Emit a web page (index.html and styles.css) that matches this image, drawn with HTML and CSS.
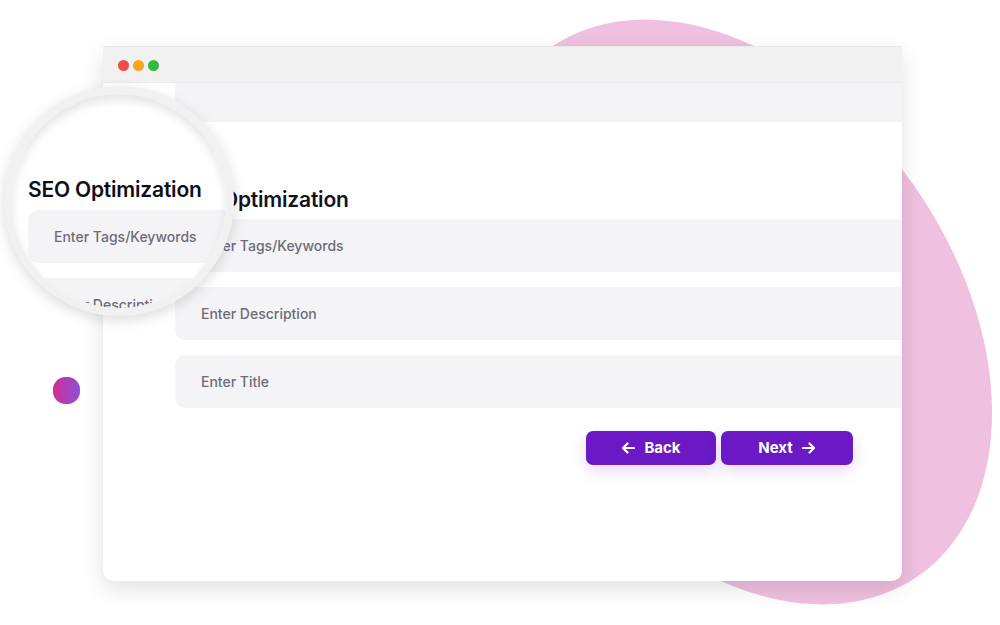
FILE: index.html
```html
<!doctype html>
<html>
<head>

  <title>SEO Optimization</title>

  <link rel="stylesheet" href="styles.css">

</head>
<body>

  <div class="stage">
    <div class="blob"></div>
    <div class="dot"></div>

    <div class="window">
      <div class="titlebar">
        <span class="light red"></span>
        <span class="light amber"></span>
        <span class="light green"></span>
      </div>
      <div class="strip"></div>

      <div class="form">
        <h2 class="heading">SEO Optimization</h2>
        <div class="field">Enter Tags/Keywords</div>
        <div class="field">Enter Description</div>
        <div class="field">Enter Title</div>

        <div class="actions">
          <button class="btn">
            <svg width="14" height="12" viewBox="0 0 14 12"><path d="M13 6H2M6.5 1.5 2 6l4.5 4.5" fill="none" stroke="#fff" stroke-width="2.2" stroke-linecap="round" stroke-linejoin="round"/></svg>
            Back
          </button>
          <button class="btn">
            Next
            <svg width="14" height="12" viewBox="0 0 14 12"><path d="M1 6h11M7.5 1.5 12 6l-4.5 4.5" fill="none" stroke="#fff" stroke-width="2.2" stroke-linecap="round" stroke-linejoin="round"/></svg>
          </button>
        </div>
      </div>
    </div>

    <!-- magnifier, shows the same form a little shifted -->
    <div class="lens">
      <div class="lens-view">
        <h2 class="heading">SEO Optimization</h2>
        <div class="field">Enter Tags/Keywords</div>
        <div class="field">Enter Description</div>
      </div>
    </div>
  </div>

</body>
</html>
```

FILE: styles.css
```css
body {
  margin: 0;
  background: #fff;
  font-family: Inter, "Noto Sans", sans-serif;
  overflow: hidden;
}

.stage {
  position: relative;
  width: 1000px;
  height: 625px;
  padding: 46px 0 0 103px;
  box-sizing: border-box;
  overflow: hidden;
}

.blob {
  position: absolute;
  left: 514px;
  top: -10px;
  width: 440px;
  height: 644px;
  border-radius: 50%;
  background: #efc0df;
  transform: rotate(-35deg);
}

.dot {
  position: absolute;
  left: 53px;
  top: 377px;
  width: 27px;
  height: 27px;
  border-radius: 46%;
  background: linear-gradient(90deg, #d22e95, #8b50d8);
}

.window {
  position: relative;
  width: 799px;
  height: 535px;
  background: #fff;
  border-radius: 2px 2px 10px 10px;
  box-shadow: 0 8px 22px rgba(0, 0, 0, 0.12);
  overflow: hidden;
}

.titlebar {
  display: flex;
  align-items: center;
  gap: 4px;
  height: 37px;
  padding: 2px 0 0 15px;
  box-sizing: border-box;
  background: #f1f1f1;
  border-top: 1px solid #e8e8e8;
  border-bottom: 1px solid #ebebeb;
}

.light {
  width: 11px;
  height: 11px;
  border-radius: 50%;
}

.red { background: #f24b4b; }
.amber { background: #f6a524; }
.green { background: #2fbd3b; }

.strip {
  height: 39px;
  margin-left: 72px;
  background: #f4f4f6;
}

.form {
  padding: 66px 0 0 72px;
}

.heading {
  margin: 0 0 7px;
  font-size: 21px;
  line-height: 24px;
  font-weight: 600;
  letter-spacing: -0.2px;
  color: #15141d;
}

.field {
  display: flex;
  align-items: center;
  height: 53px;
  margin: 0 -20px 15px 0;
  padding-left: 26px;
  border-radius: 10px;
  background: #f4f4f6;
  color: #6d6c76;
  font-size: 14px;
  font-weight: 500;
}

.actions {
  display: flex;
  justify-content: flex-end;
  gap: 5px;
  margin-top: 23px;
  padding-right: 49px;
}

.btn {
  display: flex;
  align-items: center;
  justify-content: center;
  gap: 9px;
  width: 130px;
  height: 34px;
  padding-bottom: 2px;
  border: 0;
  border-radius: 7px;
  background: #6a19c5;
  color: #fff;
  font-family: Inter, sans-serif;
  font-size: 15px;
  font-weight: 700;
  box-shadow: 0 6px 16px rgba(106, 25, 197, 0.16);
}

.btn + .btn {
  width: 132px;
}

.lens {
  position: absolute;
  left: 4px;
  top: 86px;
  width: 230px;
  height: 230px;
  box-sizing: border-box;
  border: 8px solid #f1f1f1;
  border-radius: 50%;
  background: #fff;
  overflow: hidden;
  box-shadow: 0 4px 14px rgba(0, 0, 0, 0.14);
}

.lens::after {
  content: "";
  position: absolute;
  inset: 0;
  border-radius: 50%;
  box-shadow: inset 0 6px 10px rgba(0, 0, 0, 0.1);
}

.lens-view {
  width: 420px;
  padding: 84px 0 0 16px;
}

.lens-view .heading {
  margin-bottom: 8px;
  color: #0f0e18;
}

.lens-view .field {
  margin-right: 0;
}
```
